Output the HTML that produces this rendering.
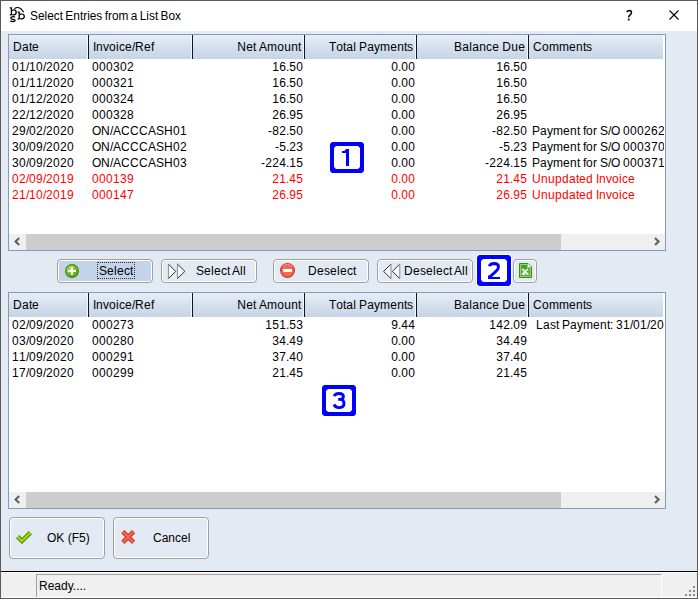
<!DOCTYPE html>
<html><head><meta charset="utf-8">
<style>
*{margin:0;padding:0;box-sizing:border-box}
html,body{width:698px;height:599px;overflow:hidden;background:#5a5a5a}
body{position:relative;font-family:"Liberation Sans",sans-serif;font-size:12px;color:#000}
.abs{position:absolute}
.t{position:absolute;white-space:nowrap;line-height:16px}
.r{text-align:right}
.red{color:#f00}
</style></head><body>

<div class="abs" style="left:1px;top:1px;width:696px;height:570px;background:#e3eaf4"></div>
<div class="abs" style="left:1px;top:1px;width:696px;height:30px;background:#fff"></div>
<svg class="abs" style="left:0px;top:0px" width="30" height="26" viewBox="0 0 30 26">
<g fill="none" stroke="#000" stroke-width="1.25">
<path d="M9.8 7.8H11.4V15M9.8 14.9H11.4"/>
<path d="M11.4 11.2Q12.6 9.8 14 9.9Q16.2 10.1 16.2 12.4Q16.1 14.6 14 14.8Q12.4 14.9 11.4 14.2"/>
<path d="M17.6 12H19.2V19.1M17.6 19H19.2"/>
<path d="M19.2 15.3Q20.4 13.9 21.8 14Q24.3 14.2 24.3 16.5Q24.2 18.8 21.8 18.9Q20.2 19 19.2 18.3"/>
<path d="M15 17.3Q14.2 16.6 12.8 16.7Q10.6 16.8 10.9 18.3Q11.3 19.1 13 19.3Q15.3 19.6 15.2 20.6Q14.9 21.6 12.8 21.5Q11 21.4 10.3 20.7" stroke-width="1.3"/>
<path d="M14.4 8.7Q19 5.2 23.8 12.2" stroke-width="1.1"/>
</g>
</svg>
<div class="t" style="left:30px;top:8px;font-size:12.5px;line-height:16px;word-spacing:-1px;transform:scaleX(0.95);transform-origin:0 0">Select Entries from a List Box</div>
<svg class="abs" style="left:620px;top:6px" width="20" height="18" viewBox="0 0 20 18"><path d="M6.7 6.1Q7.6 4.4 9.4 4.4Q11.5 4.5 11.5 6.5Q11.4 8 9.9 9.1Q8.7 10 8.7 11.5" stroke="#000" stroke-width="1.5" fill="none"/><rect x="7.8" y="12.7" width="1.9" height="1.7" fill="#000"/></svg>
<svg class="abs" style="left:669px;top:10px" width="11" height="11" viewBox="0 0 11 11"><path d="M0.5 0.5L9.5 9.5M9.5 0.5L0.5 9.5" stroke="#000" stroke-width="1.1"/></svg>
<div class="abs" style="left:8px;top:34px;width:658px;height:217px;border:1px solid #7f9cbc;background:#fff"></div>
<div class="abs" style="left:9px;top:35px;width:654px;height:24px;background:linear-gradient(#e7edf5,#c5d4e6)"></div>
<div class="t" style="left:13px;top:39px"><i style="display:inline-block;width:9px;font-style:normal">D</i><i style="display:inline-block;width:7px;font-style:normal">a</i><i style="display:inline-block;width:3px;font-style:normal">t</i><i style="display:inline-block;width:7px;font-style:normal">e</i></div>
<div class="abs" style="left:87px;top:35px;width:1px;height:24px;background:#f4f7fb"></div>
<div class="abs" style="left:88px;top:35px;width:1px;height:24px;background:#161616"></div>
<div class="t" style="left:93px;top:39px"><i style="display:inline-block;width:3px;font-style:normal">I</i><i style="display:inline-block;width:7px;font-style:normal">n</i><i style="display:inline-block;width:6px;font-style:normal">v</i><i style="display:inline-block;width:7px;font-style:normal">o</i><i style="display:inline-block;width:3px;font-style:normal">i</i><i style="display:inline-block;width:6px;font-style:normal">c</i><i style="display:inline-block;width:7px;font-style:normal">e</i><i style="display:inline-block;width:3px;font-style:normal">/</i><i style="display:inline-block;width:9px;font-style:normal">R</i><i style="display:inline-block;width:7px;font-style:normal">e</i><i style="display:inline-block;width:3px;font-style:normal">f</i></div>
<div class="abs" style="left:191px;top:35px;width:1px;height:24px;background:#f4f7fb"></div>
<div class="abs" style="left:192px;top:35px;width:1px;height:24px;background:#161616"></div>
<div class="t r" style="left:193px;width:108px;top:39px"><i style="display:inline-block;width:9px;font-style:normal">N</i><i style="display:inline-block;width:7px;font-style:normal">e</i><i style="display:inline-block;width:3px;font-style:normal">t</i><i style="display:inline-block;width:3px;font-style:normal">&nbsp;</i><i style="display:inline-block;width:8px;font-style:normal">A</i><i style="display:inline-block;width:10px;font-style:normal">m</i><i style="display:inline-block;width:7px;font-style:normal">o</i><i style="display:inline-block;width:7px;font-style:normal">u</i><i style="display:inline-block;width:7px;font-style:normal">n</i><i style="display:inline-block;width:3px;font-style:normal">t</i></div>
<div class="abs" style="left:303px;top:35px;width:1px;height:24px;background:#f4f7fb"></div>
<div class="abs" style="left:304px;top:35px;width:1px;height:24px;background:#161616"></div>
<div class="t r" style="left:305px;width:108px;top:39px"><i style="display:inline-block;width:7px;font-style:normal">T</i><i style="display:inline-block;width:7px;font-style:normal">o</i><i style="display:inline-block;width:3px;font-style:normal">t</i><i style="display:inline-block;width:7px;font-style:normal">a</i><i style="display:inline-block;width:3px;font-style:normal">l</i><i style="display:inline-block;width:3px;font-style:normal">&nbsp;</i><i style="display:inline-block;width:8px;font-style:normal">P</i><i style="display:inline-block;width:7px;font-style:normal">a</i><i style="display:inline-block;width:6px;font-style:normal">y</i><i style="display:inline-block;width:10px;font-style:normal">m</i><i style="display:inline-block;width:7px;font-style:normal">e</i><i style="display:inline-block;width:7px;font-style:normal">n</i><i style="display:inline-block;width:3px;font-style:normal">t</i><i style="display:inline-block;width:6px;font-style:normal">s</i></div>
<div class="abs" style="left:415px;top:35px;width:1px;height:24px;background:#f4f7fb"></div>
<div class="abs" style="left:416px;top:35px;width:1px;height:24px;background:#161616"></div>
<div class="t r" style="left:417px;width:108px;top:39px"><i style="display:inline-block;width:8px;font-style:normal">B</i><i style="display:inline-block;width:7px;font-style:normal">a</i><i style="display:inline-block;width:3px;font-style:normal">l</i><i style="display:inline-block;width:7px;font-style:normal">a</i><i style="display:inline-block;width:7px;font-style:normal">n</i><i style="display:inline-block;width:6px;font-style:normal">c</i><i style="display:inline-block;width:7px;font-style:normal">e</i><i style="display:inline-block;width:3px;font-style:normal">&nbsp;</i><i style="display:inline-block;width:9px;font-style:normal">D</i><i style="display:inline-block;width:7px;font-style:normal">u</i><i style="display:inline-block;width:7px;font-style:normal">e</i></div>
<div class="abs" style="left:527px;top:35px;width:1px;height:24px;background:#f4f7fb"></div>
<div class="abs" style="left:528px;top:35px;width:1px;height:24px;background:#161616"></div>
<div class="t" style="left:533px;top:39px"><i style="display:inline-block;width:9px;font-style:normal">C</i><i style="display:inline-block;width:7px;font-style:normal">o</i><i style="display:inline-block;width:10px;font-style:normal">m</i><i style="display:inline-block;width:10px;font-style:normal">m</i><i style="display:inline-block;width:7px;font-style:normal">e</i><i style="display:inline-block;width:7px;font-style:normal">n</i><i style="display:inline-block;width:3px;font-style:normal">t</i><i style="display:inline-block;width:6px;font-style:normal">s</i></div>
<div class="t" style="left:12px;top:59px;width:652px;overflow:hidden"><i style="display:inline-block;width:7px;font-style:normal">0</i><i style="display:inline-block;width:7px;font-style:normal">1</i><i style="display:inline-block;width:3px;font-style:normal">/</i><i style="display:inline-block;width:7px;font-style:normal">1</i><i style="display:inline-block;width:7px;font-style:normal">0</i><i style="display:inline-block;width:3px;font-style:normal">/</i><i style="display:inline-block;width:7px;font-style:normal">2</i><i style="display:inline-block;width:7px;font-style:normal">0</i><i style="display:inline-block;width:7px;font-style:normal">2</i><i style="display:inline-block;width:7px;font-style:normal">0</i></div>
<div class="t" style="left:92px;top:59px;width:572px;overflow:hidden"><i style="display:inline-block;width:7px;font-style:normal">0</i><i style="display:inline-block;width:7px;font-style:normal">0</i><i style="display:inline-block;width:7px;font-style:normal">0</i><i style="display:inline-block;width:7px;font-style:normal">3</i><i style="display:inline-block;width:7px;font-style:normal">0</i><i style="display:inline-block;width:7px;font-style:normal">2</i></div>
<div class="t r" style="left:193px;width:110px;top:59px"><i style="display:inline-block;width:7px;font-style:normal">1</i><i style="display:inline-block;width:7px;font-style:normal">6</i><i style="display:inline-block;width:3px;font-style:normal">.</i><i style="display:inline-block;width:7px;font-style:normal">5</i><i style="display:inline-block;width:7px;font-style:normal">0</i></div>
<div class="t r" style="left:305px;width:110px;top:59px"><i style="display:inline-block;width:7px;font-style:normal">0</i><i style="display:inline-block;width:3px;font-style:normal">.</i><i style="display:inline-block;width:7px;font-style:normal">0</i><i style="display:inline-block;width:7px;font-style:normal">0</i></div>
<div class="t r" style="left:417px;width:110px;top:59px"><i style="display:inline-block;width:7px;font-style:normal">1</i><i style="display:inline-block;width:7px;font-style:normal">6</i><i style="display:inline-block;width:3px;font-style:normal">.</i><i style="display:inline-block;width:7px;font-style:normal">5</i><i style="display:inline-block;width:7px;font-style:normal">0</i></div>
<div class="t" style="left:12px;top:75px;width:652px;overflow:hidden"><i style="display:inline-block;width:7px;font-style:normal">0</i><i style="display:inline-block;width:7px;font-style:normal">1</i><i style="display:inline-block;width:3px;font-style:normal">/</i><i style="display:inline-block;width:7px;font-style:normal">1</i><i style="display:inline-block;width:7px;font-style:normal">1</i><i style="display:inline-block;width:3px;font-style:normal">/</i><i style="display:inline-block;width:7px;font-style:normal">2</i><i style="display:inline-block;width:7px;font-style:normal">0</i><i style="display:inline-block;width:7px;font-style:normal">2</i><i style="display:inline-block;width:7px;font-style:normal">0</i></div>
<div class="t" style="left:92px;top:75px;width:572px;overflow:hidden"><i style="display:inline-block;width:7px;font-style:normal">0</i><i style="display:inline-block;width:7px;font-style:normal">0</i><i style="display:inline-block;width:7px;font-style:normal">0</i><i style="display:inline-block;width:7px;font-style:normal">3</i><i style="display:inline-block;width:7px;font-style:normal">2</i><i style="display:inline-block;width:7px;font-style:normal">1</i></div>
<div class="t r" style="left:193px;width:110px;top:75px"><i style="display:inline-block;width:7px;font-style:normal">1</i><i style="display:inline-block;width:7px;font-style:normal">6</i><i style="display:inline-block;width:3px;font-style:normal">.</i><i style="display:inline-block;width:7px;font-style:normal">5</i><i style="display:inline-block;width:7px;font-style:normal">0</i></div>
<div class="t r" style="left:305px;width:110px;top:75px"><i style="display:inline-block;width:7px;font-style:normal">0</i><i style="display:inline-block;width:3px;font-style:normal">.</i><i style="display:inline-block;width:7px;font-style:normal">0</i><i style="display:inline-block;width:7px;font-style:normal">0</i></div>
<div class="t r" style="left:417px;width:110px;top:75px"><i style="display:inline-block;width:7px;font-style:normal">1</i><i style="display:inline-block;width:7px;font-style:normal">6</i><i style="display:inline-block;width:3px;font-style:normal">.</i><i style="display:inline-block;width:7px;font-style:normal">5</i><i style="display:inline-block;width:7px;font-style:normal">0</i></div>
<div class="t" style="left:12px;top:91px;width:652px;overflow:hidden"><i style="display:inline-block;width:7px;font-style:normal">0</i><i style="display:inline-block;width:7px;font-style:normal">1</i><i style="display:inline-block;width:3px;font-style:normal">/</i><i style="display:inline-block;width:7px;font-style:normal">1</i><i style="display:inline-block;width:7px;font-style:normal">2</i><i style="display:inline-block;width:3px;font-style:normal">/</i><i style="display:inline-block;width:7px;font-style:normal">2</i><i style="display:inline-block;width:7px;font-style:normal">0</i><i style="display:inline-block;width:7px;font-style:normal">2</i><i style="display:inline-block;width:7px;font-style:normal">0</i></div>
<div class="t" style="left:92px;top:91px;width:572px;overflow:hidden"><i style="display:inline-block;width:7px;font-style:normal">0</i><i style="display:inline-block;width:7px;font-style:normal">0</i><i style="display:inline-block;width:7px;font-style:normal">0</i><i style="display:inline-block;width:7px;font-style:normal">3</i><i style="display:inline-block;width:7px;font-style:normal">2</i><i style="display:inline-block;width:7px;font-style:normal">4</i></div>
<div class="t r" style="left:193px;width:110px;top:91px"><i style="display:inline-block;width:7px;font-style:normal">1</i><i style="display:inline-block;width:7px;font-style:normal">6</i><i style="display:inline-block;width:3px;font-style:normal">.</i><i style="display:inline-block;width:7px;font-style:normal">5</i><i style="display:inline-block;width:7px;font-style:normal">0</i></div>
<div class="t r" style="left:305px;width:110px;top:91px"><i style="display:inline-block;width:7px;font-style:normal">0</i><i style="display:inline-block;width:3px;font-style:normal">.</i><i style="display:inline-block;width:7px;font-style:normal">0</i><i style="display:inline-block;width:7px;font-style:normal">0</i></div>
<div class="t r" style="left:417px;width:110px;top:91px"><i style="display:inline-block;width:7px;font-style:normal">1</i><i style="display:inline-block;width:7px;font-style:normal">6</i><i style="display:inline-block;width:3px;font-style:normal">.</i><i style="display:inline-block;width:7px;font-style:normal">5</i><i style="display:inline-block;width:7px;font-style:normal">0</i></div>
<div class="t" style="left:12px;top:107px;width:652px;overflow:hidden"><i style="display:inline-block;width:7px;font-style:normal">2</i><i style="display:inline-block;width:7px;font-style:normal">2</i><i style="display:inline-block;width:3px;font-style:normal">/</i><i style="display:inline-block;width:7px;font-style:normal">1</i><i style="display:inline-block;width:7px;font-style:normal">2</i><i style="display:inline-block;width:3px;font-style:normal">/</i><i style="display:inline-block;width:7px;font-style:normal">2</i><i style="display:inline-block;width:7px;font-style:normal">0</i><i style="display:inline-block;width:7px;font-style:normal">2</i><i style="display:inline-block;width:7px;font-style:normal">0</i></div>
<div class="t" style="left:92px;top:107px;width:572px;overflow:hidden"><i style="display:inline-block;width:7px;font-style:normal">0</i><i style="display:inline-block;width:7px;font-style:normal">0</i><i style="display:inline-block;width:7px;font-style:normal">0</i><i style="display:inline-block;width:7px;font-style:normal">3</i><i style="display:inline-block;width:7px;font-style:normal">2</i><i style="display:inline-block;width:7px;font-style:normal">8</i></div>
<div class="t r" style="left:193px;width:110px;top:107px"><i style="display:inline-block;width:7px;font-style:normal">2</i><i style="display:inline-block;width:7px;font-style:normal">6</i><i style="display:inline-block;width:3px;font-style:normal">.</i><i style="display:inline-block;width:7px;font-style:normal">9</i><i style="display:inline-block;width:7px;font-style:normal">5</i></div>
<div class="t r" style="left:305px;width:110px;top:107px"><i style="display:inline-block;width:7px;font-style:normal">0</i><i style="display:inline-block;width:3px;font-style:normal">.</i><i style="display:inline-block;width:7px;font-style:normal">0</i><i style="display:inline-block;width:7px;font-style:normal">0</i></div>
<div class="t r" style="left:417px;width:110px;top:107px"><i style="display:inline-block;width:7px;font-style:normal">2</i><i style="display:inline-block;width:7px;font-style:normal">6</i><i style="display:inline-block;width:3px;font-style:normal">.</i><i style="display:inline-block;width:7px;font-style:normal">9</i><i style="display:inline-block;width:7px;font-style:normal">5</i></div>
<div class="t" style="left:12px;top:123px;width:652px;overflow:hidden"><i style="display:inline-block;width:7px;font-style:normal">2</i><i style="display:inline-block;width:7px;font-style:normal">9</i><i style="display:inline-block;width:3px;font-style:normal">/</i><i style="display:inline-block;width:7px;font-style:normal">0</i><i style="display:inline-block;width:7px;font-style:normal">2</i><i style="display:inline-block;width:3px;font-style:normal">/</i><i style="display:inline-block;width:7px;font-style:normal">2</i><i style="display:inline-block;width:7px;font-style:normal">0</i><i style="display:inline-block;width:7px;font-style:normal">2</i><i style="display:inline-block;width:7px;font-style:normal">0</i></div>
<div class="t" style="left:92px;top:123px;width:572px;overflow:hidden"><i style="display:inline-block;width:9px;font-style:normal">O</i><i style="display:inline-block;width:9px;font-style:normal">N</i><i style="display:inline-block;width:3px;font-style:normal">/</i><i style="display:inline-block;width:8px;font-style:normal">A</i><i style="display:inline-block;width:9px;font-style:normal">C</i><i style="display:inline-block;width:9px;font-style:normal">C</i><i style="display:inline-block;width:9px;font-style:normal">C</i><i style="display:inline-block;width:8px;font-style:normal">A</i><i style="display:inline-block;width:8px;font-style:normal">S</i><i style="display:inline-block;width:9px;font-style:normal">H</i><i style="display:inline-block;width:7px;font-style:normal">0</i><i style="display:inline-block;width:7px;font-style:normal">1</i></div>
<div class="t r" style="left:193px;width:110px;top:123px"><i style="display:inline-block;width:4px;font-style:normal">-</i><i style="display:inline-block;width:7px;font-style:normal">8</i><i style="display:inline-block;width:7px;font-style:normal">2</i><i style="display:inline-block;width:3px;font-style:normal">.</i><i style="display:inline-block;width:7px;font-style:normal">5</i><i style="display:inline-block;width:7px;font-style:normal">0</i></div>
<div class="t r" style="left:305px;width:110px;top:123px"><i style="display:inline-block;width:7px;font-style:normal">0</i><i style="display:inline-block;width:3px;font-style:normal">.</i><i style="display:inline-block;width:7px;font-style:normal">0</i><i style="display:inline-block;width:7px;font-style:normal">0</i></div>
<div class="t r" style="left:417px;width:110px;top:123px"><i style="display:inline-block;width:4px;font-style:normal">-</i><i style="display:inline-block;width:7px;font-style:normal">8</i><i style="display:inline-block;width:7px;font-style:normal">2</i><i style="display:inline-block;width:3px;font-style:normal">.</i><i style="display:inline-block;width:7px;font-style:normal">5</i><i style="display:inline-block;width:7px;font-style:normal">0</i></div>
<div class="t" style="left:532px;top:123px;width:132px;overflow:hidden"><i style="display:inline-block;width:8px;font-style:normal">P</i><i style="display:inline-block;width:7px;font-style:normal">a</i><i style="display:inline-block;width:6px;font-style:normal">y</i><i style="display:inline-block;width:10px;font-style:normal">m</i><i style="display:inline-block;width:7px;font-style:normal">e</i><i style="display:inline-block;width:7px;font-style:normal">n</i><i style="display:inline-block;width:3px;font-style:normal">t</i><i style="display:inline-block;width:3px;font-style:normal">&nbsp;</i><i style="display:inline-block;width:3px;font-style:normal">f</i><i style="display:inline-block;width:7px;font-style:normal">o</i><i style="display:inline-block;width:4px;font-style:normal">r</i><i style="display:inline-block;width:3px;font-style:normal">&nbsp;</i><i style="display:inline-block;width:8px;font-style:normal">S</i><i style="display:inline-block;width:3px;font-style:normal">/</i><i style="display:inline-block;width:9px;font-style:normal">O</i><i style="display:inline-block;width:3px;font-style:normal">&nbsp;</i><i style="display:inline-block;width:7px;font-style:normal">0</i><i style="display:inline-block;width:7px;font-style:normal">0</i><i style="display:inline-block;width:7px;font-style:normal">0</i><i style="display:inline-block;width:7px;font-style:normal">2</i><i style="display:inline-block;width:7px;font-style:normal">6</i><i style="display:inline-block;width:7px;font-style:normal">2</i></div>
<div class="t" style="left:12px;top:139px;width:652px;overflow:hidden"><i style="display:inline-block;width:7px;font-style:normal">3</i><i style="display:inline-block;width:7px;font-style:normal">0</i><i style="display:inline-block;width:3px;font-style:normal">/</i><i style="display:inline-block;width:7px;font-style:normal">0</i><i style="display:inline-block;width:7px;font-style:normal">9</i><i style="display:inline-block;width:3px;font-style:normal">/</i><i style="display:inline-block;width:7px;font-style:normal">2</i><i style="display:inline-block;width:7px;font-style:normal">0</i><i style="display:inline-block;width:7px;font-style:normal">2</i><i style="display:inline-block;width:7px;font-style:normal">0</i></div>
<div class="t" style="left:92px;top:139px;width:572px;overflow:hidden"><i style="display:inline-block;width:9px;font-style:normal">O</i><i style="display:inline-block;width:9px;font-style:normal">N</i><i style="display:inline-block;width:3px;font-style:normal">/</i><i style="display:inline-block;width:8px;font-style:normal">A</i><i style="display:inline-block;width:9px;font-style:normal">C</i><i style="display:inline-block;width:9px;font-style:normal">C</i><i style="display:inline-block;width:9px;font-style:normal">C</i><i style="display:inline-block;width:8px;font-style:normal">A</i><i style="display:inline-block;width:8px;font-style:normal">S</i><i style="display:inline-block;width:9px;font-style:normal">H</i><i style="display:inline-block;width:7px;font-style:normal">0</i><i style="display:inline-block;width:7px;font-style:normal">2</i></div>
<div class="t r" style="left:193px;width:110px;top:139px"><i style="display:inline-block;width:4px;font-style:normal">-</i><i style="display:inline-block;width:7px;font-style:normal">5</i><i style="display:inline-block;width:3px;font-style:normal">.</i><i style="display:inline-block;width:7px;font-style:normal">2</i><i style="display:inline-block;width:7px;font-style:normal">3</i></div>
<div class="t r" style="left:305px;width:110px;top:139px"><i style="display:inline-block;width:7px;font-style:normal">0</i><i style="display:inline-block;width:3px;font-style:normal">.</i><i style="display:inline-block;width:7px;font-style:normal">0</i><i style="display:inline-block;width:7px;font-style:normal">0</i></div>
<div class="t r" style="left:417px;width:110px;top:139px"><i style="display:inline-block;width:4px;font-style:normal">-</i><i style="display:inline-block;width:7px;font-style:normal">5</i><i style="display:inline-block;width:3px;font-style:normal">.</i><i style="display:inline-block;width:7px;font-style:normal">2</i><i style="display:inline-block;width:7px;font-style:normal">3</i></div>
<div class="t" style="left:532px;top:139px;width:132px;overflow:hidden"><i style="display:inline-block;width:8px;font-style:normal">P</i><i style="display:inline-block;width:7px;font-style:normal">a</i><i style="display:inline-block;width:6px;font-style:normal">y</i><i style="display:inline-block;width:10px;font-style:normal">m</i><i style="display:inline-block;width:7px;font-style:normal">e</i><i style="display:inline-block;width:7px;font-style:normal">n</i><i style="display:inline-block;width:3px;font-style:normal">t</i><i style="display:inline-block;width:3px;font-style:normal">&nbsp;</i><i style="display:inline-block;width:3px;font-style:normal">f</i><i style="display:inline-block;width:7px;font-style:normal">o</i><i style="display:inline-block;width:4px;font-style:normal">r</i><i style="display:inline-block;width:3px;font-style:normal">&nbsp;</i><i style="display:inline-block;width:8px;font-style:normal">S</i><i style="display:inline-block;width:3px;font-style:normal">/</i><i style="display:inline-block;width:9px;font-style:normal">O</i><i style="display:inline-block;width:3px;font-style:normal">&nbsp;</i><i style="display:inline-block;width:7px;font-style:normal">0</i><i style="display:inline-block;width:7px;font-style:normal">0</i><i style="display:inline-block;width:7px;font-style:normal">0</i><i style="display:inline-block;width:7px;font-style:normal">3</i><i style="display:inline-block;width:7px;font-style:normal">7</i><i style="display:inline-block;width:7px;font-style:normal">0</i></div>
<div class="t" style="left:12px;top:155px;width:652px;overflow:hidden"><i style="display:inline-block;width:7px;font-style:normal">3</i><i style="display:inline-block;width:7px;font-style:normal">0</i><i style="display:inline-block;width:3px;font-style:normal">/</i><i style="display:inline-block;width:7px;font-style:normal">0</i><i style="display:inline-block;width:7px;font-style:normal">9</i><i style="display:inline-block;width:3px;font-style:normal">/</i><i style="display:inline-block;width:7px;font-style:normal">2</i><i style="display:inline-block;width:7px;font-style:normal">0</i><i style="display:inline-block;width:7px;font-style:normal">2</i><i style="display:inline-block;width:7px;font-style:normal">0</i></div>
<div class="t" style="left:92px;top:155px;width:572px;overflow:hidden"><i style="display:inline-block;width:9px;font-style:normal">O</i><i style="display:inline-block;width:9px;font-style:normal">N</i><i style="display:inline-block;width:3px;font-style:normal">/</i><i style="display:inline-block;width:8px;font-style:normal">A</i><i style="display:inline-block;width:9px;font-style:normal">C</i><i style="display:inline-block;width:9px;font-style:normal">C</i><i style="display:inline-block;width:9px;font-style:normal">C</i><i style="display:inline-block;width:8px;font-style:normal">A</i><i style="display:inline-block;width:8px;font-style:normal">S</i><i style="display:inline-block;width:9px;font-style:normal">H</i><i style="display:inline-block;width:7px;font-style:normal">0</i><i style="display:inline-block;width:7px;font-style:normal">3</i></div>
<div class="t r" style="left:193px;width:110px;top:155px"><i style="display:inline-block;width:4px;font-style:normal">-</i><i style="display:inline-block;width:7px;font-style:normal">2</i><i style="display:inline-block;width:7px;font-style:normal">2</i><i style="display:inline-block;width:7px;font-style:normal">4</i><i style="display:inline-block;width:3px;font-style:normal">.</i><i style="display:inline-block;width:7px;font-style:normal">1</i><i style="display:inline-block;width:7px;font-style:normal">5</i></div>
<div class="t r" style="left:305px;width:110px;top:155px"><i style="display:inline-block;width:7px;font-style:normal">0</i><i style="display:inline-block;width:3px;font-style:normal">.</i><i style="display:inline-block;width:7px;font-style:normal">0</i><i style="display:inline-block;width:7px;font-style:normal">0</i></div>
<div class="t r" style="left:417px;width:110px;top:155px"><i style="display:inline-block;width:4px;font-style:normal">-</i><i style="display:inline-block;width:7px;font-style:normal">2</i><i style="display:inline-block;width:7px;font-style:normal">2</i><i style="display:inline-block;width:7px;font-style:normal">4</i><i style="display:inline-block;width:3px;font-style:normal">.</i><i style="display:inline-block;width:7px;font-style:normal">1</i><i style="display:inline-block;width:7px;font-style:normal">5</i></div>
<div class="t" style="left:532px;top:155px;width:132px;overflow:hidden"><i style="display:inline-block;width:8px;font-style:normal">P</i><i style="display:inline-block;width:7px;font-style:normal">a</i><i style="display:inline-block;width:6px;font-style:normal">y</i><i style="display:inline-block;width:10px;font-style:normal">m</i><i style="display:inline-block;width:7px;font-style:normal">e</i><i style="display:inline-block;width:7px;font-style:normal">n</i><i style="display:inline-block;width:3px;font-style:normal">t</i><i style="display:inline-block;width:3px;font-style:normal">&nbsp;</i><i style="display:inline-block;width:3px;font-style:normal">f</i><i style="display:inline-block;width:7px;font-style:normal">o</i><i style="display:inline-block;width:4px;font-style:normal">r</i><i style="display:inline-block;width:3px;font-style:normal">&nbsp;</i><i style="display:inline-block;width:8px;font-style:normal">S</i><i style="display:inline-block;width:3px;font-style:normal">/</i><i style="display:inline-block;width:9px;font-style:normal">O</i><i style="display:inline-block;width:3px;font-style:normal">&nbsp;</i><i style="display:inline-block;width:7px;font-style:normal">0</i><i style="display:inline-block;width:7px;font-style:normal">0</i><i style="display:inline-block;width:7px;font-style:normal">0</i><i style="display:inline-block;width:7px;font-style:normal">3</i><i style="display:inline-block;width:7px;font-style:normal">7</i><i style="display:inline-block;width:7px;font-style:normal">1</i></div>
<div class="t red" style="left:12px;top:171px;width:652px;overflow:hidden"><i style="display:inline-block;width:7px;font-style:normal">0</i><i style="display:inline-block;width:7px;font-style:normal">2</i><i style="display:inline-block;width:3px;font-style:normal">/</i><i style="display:inline-block;width:7px;font-style:normal">0</i><i style="display:inline-block;width:7px;font-style:normal">9</i><i style="display:inline-block;width:3px;font-style:normal">/</i><i style="display:inline-block;width:7px;font-style:normal">2</i><i style="display:inline-block;width:7px;font-style:normal">0</i><i style="display:inline-block;width:7px;font-style:normal">1</i><i style="display:inline-block;width:7px;font-style:normal">9</i></div>
<div class="t red" style="left:92px;top:171px;width:572px;overflow:hidden"><i style="display:inline-block;width:7px;font-style:normal">0</i><i style="display:inline-block;width:7px;font-style:normal">0</i><i style="display:inline-block;width:7px;font-style:normal">0</i><i style="display:inline-block;width:7px;font-style:normal">1</i><i style="display:inline-block;width:7px;font-style:normal">3</i><i style="display:inline-block;width:7px;font-style:normal">9</i></div>
<div class="t r red" style="left:193px;width:110px;top:171px"><i style="display:inline-block;width:7px;font-style:normal">2</i><i style="display:inline-block;width:7px;font-style:normal">1</i><i style="display:inline-block;width:3px;font-style:normal">.</i><i style="display:inline-block;width:7px;font-style:normal">4</i><i style="display:inline-block;width:7px;font-style:normal">5</i></div>
<div class="t r red" style="left:305px;width:110px;top:171px"><i style="display:inline-block;width:7px;font-style:normal">0</i><i style="display:inline-block;width:3px;font-style:normal">.</i><i style="display:inline-block;width:7px;font-style:normal">0</i><i style="display:inline-block;width:7px;font-style:normal">0</i></div>
<div class="t r red" style="left:417px;width:110px;top:171px"><i style="display:inline-block;width:7px;font-style:normal">2</i><i style="display:inline-block;width:7px;font-style:normal">1</i><i style="display:inline-block;width:3px;font-style:normal">.</i><i style="display:inline-block;width:7px;font-style:normal">4</i><i style="display:inline-block;width:7px;font-style:normal">5</i></div>
<div class="t red" style="left:532px;top:171px;width:132px;overflow:hidden"><i style="display:inline-block;width:9px;font-style:normal">U</i><i style="display:inline-block;width:7px;font-style:normal">n</i><i style="display:inline-block;width:7px;font-style:normal">u</i><i style="display:inline-block;width:7px;font-style:normal">p</i><i style="display:inline-block;width:7px;font-style:normal">d</i><i style="display:inline-block;width:7px;font-style:normal">a</i><i style="display:inline-block;width:3px;font-style:normal">t</i><i style="display:inline-block;width:7px;font-style:normal">e</i><i style="display:inline-block;width:7px;font-style:normal">d</i><i style="display:inline-block;width:3px;font-style:normal">&nbsp;</i><i style="display:inline-block;width:3px;font-style:normal">I</i><i style="display:inline-block;width:7px;font-style:normal">n</i><i style="display:inline-block;width:6px;font-style:normal">v</i><i style="display:inline-block;width:7px;font-style:normal">o</i><i style="display:inline-block;width:3px;font-style:normal">i</i><i style="display:inline-block;width:6px;font-style:normal">c</i><i style="display:inline-block;width:7px;font-style:normal">e</i></div>
<div class="t red" style="left:12px;top:187px;width:652px;overflow:hidden"><i style="display:inline-block;width:7px;font-style:normal">2</i><i style="display:inline-block;width:7px;font-style:normal">1</i><i style="display:inline-block;width:3px;font-style:normal">/</i><i style="display:inline-block;width:7px;font-style:normal">1</i><i style="display:inline-block;width:7px;font-style:normal">0</i><i style="display:inline-block;width:3px;font-style:normal">/</i><i style="display:inline-block;width:7px;font-style:normal">2</i><i style="display:inline-block;width:7px;font-style:normal">0</i><i style="display:inline-block;width:7px;font-style:normal">1</i><i style="display:inline-block;width:7px;font-style:normal">9</i></div>
<div class="t red" style="left:92px;top:187px;width:572px;overflow:hidden"><i style="display:inline-block;width:7px;font-style:normal">0</i><i style="display:inline-block;width:7px;font-style:normal">0</i><i style="display:inline-block;width:7px;font-style:normal">0</i><i style="display:inline-block;width:7px;font-style:normal">1</i><i style="display:inline-block;width:7px;font-style:normal">4</i><i style="display:inline-block;width:7px;font-style:normal">7</i></div>
<div class="t r red" style="left:193px;width:110px;top:187px"><i style="display:inline-block;width:7px;font-style:normal">2</i><i style="display:inline-block;width:7px;font-style:normal">6</i><i style="display:inline-block;width:3px;font-style:normal">.</i><i style="display:inline-block;width:7px;font-style:normal">9</i><i style="display:inline-block;width:7px;font-style:normal">5</i></div>
<div class="t r red" style="left:305px;width:110px;top:187px"><i style="display:inline-block;width:7px;font-style:normal">0</i><i style="display:inline-block;width:3px;font-style:normal">.</i><i style="display:inline-block;width:7px;font-style:normal">0</i><i style="display:inline-block;width:7px;font-style:normal">0</i></div>
<div class="t r red" style="left:417px;width:110px;top:187px"><i style="display:inline-block;width:7px;font-style:normal">2</i><i style="display:inline-block;width:7px;font-style:normal">6</i><i style="display:inline-block;width:3px;font-style:normal">.</i><i style="display:inline-block;width:7px;font-style:normal">9</i><i style="display:inline-block;width:7px;font-style:normal">5</i></div>
<div class="t red" style="left:532px;top:187px;width:132px;overflow:hidden"><i style="display:inline-block;width:9px;font-style:normal">U</i><i style="display:inline-block;width:7px;font-style:normal">n</i><i style="display:inline-block;width:7px;font-style:normal">u</i><i style="display:inline-block;width:7px;font-style:normal">p</i><i style="display:inline-block;width:7px;font-style:normal">d</i><i style="display:inline-block;width:7px;font-style:normal">a</i><i style="display:inline-block;width:3px;font-style:normal">t</i><i style="display:inline-block;width:7px;font-style:normal">e</i><i style="display:inline-block;width:7px;font-style:normal">d</i><i style="display:inline-block;width:3px;font-style:normal">&nbsp;</i><i style="display:inline-block;width:3px;font-style:normal">I</i><i style="display:inline-block;width:7px;font-style:normal">n</i><i style="display:inline-block;width:6px;font-style:normal">v</i><i style="display:inline-block;width:7px;font-style:normal">o</i><i style="display:inline-block;width:3px;font-style:normal">i</i><i style="display:inline-block;width:6px;font-style:normal">c</i><i style="display:inline-block;width:7px;font-style:normal">e</i></div>
<div class="abs" style="left:9px;top:234px;width:656px;height:16px;background:#efefef"></div>
<div class="abs" style="left:26px;top:234px;width:535px;height:16px;background:#cdcdcd"></div>
<svg class="abs" style="left:13px;top:237px" width="10" height="11" viewBox="0 0 10 11"><path d="M6.2 1.1L2.6 4.5L6.2 7.9" fill="none" stroke="#606060" stroke-width="2.1"/></svg>
<svg class="abs" style="left:652px;top:237px" width="10" height="11" viewBox="0 0 10 11"><path d="M3 1.1L6.6 4.5L3 7.9" fill="none" stroke="#606060" stroke-width="2.1"/></svg>
<div class="abs" style="left:8px;top:292px;width:658px;height:217px;border:1px solid #7f9cbc;background:#fff"></div>
<div class="abs" style="left:9px;top:293px;width:654px;height:24px;background:linear-gradient(#e7edf5,#c5d4e6)"></div>
<div class="t" style="left:13px;top:297px"><i style="display:inline-block;width:9px;font-style:normal">D</i><i style="display:inline-block;width:7px;font-style:normal">a</i><i style="display:inline-block;width:3px;font-style:normal">t</i><i style="display:inline-block;width:7px;font-style:normal">e</i></div>
<div class="abs" style="left:87px;top:293px;width:1px;height:24px;background:#f4f7fb"></div>
<div class="abs" style="left:88px;top:293px;width:1px;height:24px;background:#161616"></div>
<div class="t" style="left:93px;top:297px"><i style="display:inline-block;width:3px;font-style:normal">I</i><i style="display:inline-block;width:7px;font-style:normal">n</i><i style="display:inline-block;width:6px;font-style:normal">v</i><i style="display:inline-block;width:7px;font-style:normal">o</i><i style="display:inline-block;width:3px;font-style:normal">i</i><i style="display:inline-block;width:6px;font-style:normal">c</i><i style="display:inline-block;width:7px;font-style:normal">e</i><i style="display:inline-block;width:3px;font-style:normal">/</i><i style="display:inline-block;width:9px;font-style:normal">R</i><i style="display:inline-block;width:7px;font-style:normal">e</i><i style="display:inline-block;width:3px;font-style:normal">f</i></div>
<div class="abs" style="left:191px;top:293px;width:1px;height:24px;background:#f4f7fb"></div>
<div class="abs" style="left:192px;top:293px;width:1px;height:24px;background:#161616"></div>
<div class="t r" style="left:193px;width:108px;top:297px"><i style="display:inline-block;width:9px;font-style:normal">N</i><i style="display:inline-block;width:7px;font-style:normal">e</i><i style="display:inline-block;width:3px;font-style:normal">t</i><i style="display:inline-block;width:3px;font-style:normal">&nbsp;</i><i style="display:inline-block;width:8px;font-style:normal">A</i><i style="display:inline-block;width:10px;font-style:normal">m</i><i style="display:inline-block;width:7px;font-style:normal">o</i><i style="display:inline-block;width:7px;font-style:normal">u</i><i style="display:inline-block;width:7px;font-style:normal">n</i><i style="display:inline-block;width:3px;font-style:normal">t</i></div>
<div class="abs" style="left:303px;top:293px;width:1px;height:24px;background:#f4f7fb"></div>
<div class="abs" style="left:304px;top:293px;width:1px;height:24px;background:#161616"></div>
<div class="t r" style="left:305px;width:108px;top:297px"><i style="display:inline-block;width:7px;font-style:normal">T</i><i style="display:inline-block;width:7px;font-style:normal">o</i><i style="display:inline-block;width:3px;font-style:normal">t</i><i style="display:inline-block;width:7px;font-style:normal">a</i><i style="display:inline-block;width:3px;font-style:normal">l</i><i style="display:inline-block;width:3px;font-style:normal">&nbsp;</i><i style="display:inline-block;width:8px;font-style:normal">P</i><i style="display:inline-block;width:7px;font-style:normal">a</i><i style="display:inline-block;width:6px;font-style:normal">y</i><i style="display:inline-block;width:10px;font-style:normal">m</i><i style="display:inline-block;width:7px;font-style:normal">e</i><i style="display:inline-block;width:7px;font-style:normal">n</i><i style="display:inline-block;width:3px;font-style:normal">t</i><i style="display:inline-block;width:6px;font-style:normal">s</i></div>
<div class="abs" style="left:415px;top:293px;width:1px;height:24px;background:#f4f7fb"></div>
<div class="abs" style="left:416px;top:293px;width:1px;height:24px;background:#161616"></div>
<div class="t r" style="left:417px;width:108px;top:297px"><i style="display:inline-block;width:8px;font-style:normal">B</i><i style="display:inline-block;width:7px;font-style:normal">a</i><i style="display:inline-block;width:3px;font-style:normal">l</i><i style="display:inline-block;width:7px;font-style:normal">a</i><i style="display:inline-block;width:7px;font-style:normal">n</i><i style="display:inline-block;width:6px;font-style:normal">c</i><i style="display:inline-block;width:7px;font-style:normal">e</i><i style="display:inline-block;width:3px;font-style:normal">&nbsp;</i><i style="display:inline-block;width:9px;font-style:normal">D</i><i style="display:inline-block;width:7px;font-style:normal">u</i><i style="display:inline-block;width:7px;font-style:normal">e</i></div>
<div class="abs" style="left:527px;top:293px;width:1px;height:24px;background:#f4f7fb"></div>
<div class="abs" style="left:528px;top:293px;width:1px;height:24px;background:#161616"></div>
<div class="t" style="left:533px;top:297px"><i style="display:inline-block;width:9px;font-style:normal">C</i><i style="display:inline-block;width:7px;font-style:normal">o</i><i style="display:inline-block;width:10px;font-style:normal">m</i><i style="display:inline-block;width:10px;font-style:normal">m</i><i style="display:inline-block;width:7px;font-style:normal">e</i><i style="display:inline-block;width:7px;font-style:normal">n</i><i style="display:inline-block;width:3px;font-style:normal">t</i><i style="display:inline-block;width:6px;font-style:normal">s</i></div>
<div class="t" style="left:12px;top:317px;width:652px;overflow:hidden"><i style="display:inline-block;width:7px;font-style:normal">0</i><i style="display:inline-block;width:7px;font-style:normal">2</i><i style="display:inline-block;width:3px;font-style:normal">/</i><i style="display:inline-block;width:7px;font-style:normal">0</i><i style="display:inline-block;width:7px;font-style:normal">9</i><i style="display:inline-block;width:3px;font-style:normal">/</i><i style="display:inline-block;width:7px;font-style:normal">2</i><i style="display:inline-block;width:7px;font-style:normal">0</i><i style="display:inline-block;width:7px;font-style:normal">2</i><i style="display:inline-block;width:7px;font-style:normal">0</i></div>
<div class="t" style="left:92px;top:317px;width:572px;overflow:hidden"><i style="display:inline-block;width:7px;font-style:normal">0</i><i style="display:inline-block;width:7px;font-style:normal">0</i><i style="display:inline-block;width:7px;font-style:normal">0</i><i style="display:inline-block;width:7px;font-style:normal">2</i><i style="display:inline-block;width:7px;font-style:normal">7</i><i style="display:inline-block;width:7px;font-style:normal">3</i></div>
<div class="t r" style="left:193px;width:110px;top:317px"><i style="display:inline-block;width:7px;font-style:normal">1</i><i style="display:inline-block;width:7px;font-style:normal">5</i><i style="display:inline-block;width:7px;font-style:normal">1</i><i style="display:inline-block;width:3px;font-style:normal">.</i><i style="display:inline-block;width:7px;font-style:normal">5</i><i style="display:inline-block;width:7px;font-style:normal">3</i></div>
<div class="t r" style="left:305px;width:110px;top:317px"><i style="display:inline-block;width:7px;font-style:normal">9</i><i style="display:inline-block;width:3px;font-style:normal">.</i><i style="display:inline-block;width:7px;font-style:normal">4</i><i style="display:inline-block;width:7px;font-style:normal">4</i></div>
<div class="t r" style="left:417px;width:110px;top:317px"><i style="display:inline-block;width:7px;font-style:normal">1</i><i style="display:inline-block;width:7px;font-style:normal">4</i><i style="display:inline-block;width:7px;font-style:normal">2</i><i style="display:inline-block;width:3px;font-style:normal">.</i><i style="display:inline-block;width:7px;font-style:normal">0</i><i style="display:inline-block;width:7px;font-style:normal">9</i></div>
<div class="t" style="left:532px;top:317px;width:132px;overflow:hidden"><i style="display:inline-block;width:4px;font-style:normal">&nbsp;</i><i style="display:inline-block;width:7px;font-style:normal">L</i><i style="display:inline-block;width:7px;font-style:normal">a</i><i style="display:inline-block;width:6px;font-style:normal">s</i><i style="display:inline-block;width:3px;font-style:normal">t</i><i style="display:inline-block;width:3px;font-style:normal">&nbsp;</i><i style="display:inline-block;width:8px;font-style:normal">P</i><i style="display:inline-block;width:7px;font-style:normal">a</i><i style="display:inline-block;width:6px;font-style:normal">y</i><i style="display:inline-block;width:10px;font-style:normal">m</i><i style="display:inline-block;width:7px;font-style:normal">e</i><i style="display:inline-block;width:7px;font-style:normal">n</i><i style="display:inline-block;width:3px;font-style:normal">t</i><i style="display:inline-block;width:3px;font-style:normal">:</i><i style="display:inline-block;width:3px;font-style:normal">&nbsp;</i><i style="display:inline-block;width:7px;font-style:normal">3</i><i style="display:inline-block;width:7px;font-style:normal">1</i><i style="display:inline-block;width:3px;font-style:normal">/</i><i style="display:inline-block;width:7px;font-style:normal">0</i><i style="display:inline-block;width:7px;font-style:normal">1</i><i style="display:inline-block;width:3px;font-style:normal">/</i><i style="display:inline-block;width:7px;font-style:normal">2</i><i style="display:inline-block;width:7px;font-style:normal">0</i><i style="display:inline-block;width:7px;font-style:normal">2</i><i style="display:inline-block;width:7px;font-style:normal">1</i></div>
<div class="t" style="left:12px;top:333px;width:652px;overflow:hidden"><i style="display:inline-block;width:7px;font-style:normal">0</i><i style="display:inline-block;width:7px;font-style:normal">3</i><i style="display:inline-block;width:3px;font-style:normal">/</i><i style="display:inline-block;width:7px;font-style:normal">0</i><i style="display:inline-block;width:7px;font-style:normal">9</i><i style="display:inline-block;width:3px;font-style:normal">/</i><i style="display:inline-block;width:7px;font-style:normal">2</i><i style="display:inline-block;width:7px;font-style:normal">0</i><i style="display:inline-block;width:7px;font-style:normal">2</i><i style="display:inline-block;width:7px;font-style:normal">0</i></div>
<div class="t" style="left:92px;top:333px;width:572px;overflow:hidden"><i style="display:inline-block;width:7px;font-style:normal">0</i><i style="display:inline-block;width:7px;font-style:normal">0</i><i style="display:inline-block;width:7px;font-style:normal">0</i><i style="display:inline-block;width:7px;font-style:normal">2</i><i style="display:inline-block;width:7px;font-style:normal">8</i><i style="display:inline-block;width:7px;font-style:normal">0</i></div>
<div class="t r" style="left:193px;width:110px;top:333px"><i style="display:inline-block;width:7px;font-style:normal">3</i><i style="display:inline-block;width:7px;font-style:normal">4</i><i style="display:inline-block;width:3px;font-style:normal">.</i><i style="display:inline-block;width:7px;font-style:normal">4</i><i style="display:inline-block;width:7px;font-style:normal">9</i></div>
<div class="t r" style="left:305px;width:110px;top:333px"><i style="display:inline-block;width:7px;font-style:normal">0</i><i style="display:inline-block;width:3px;font-style:normal">.</i><i style="display:inline-block;width:7px;font-style:normal">0</i><i style="display:inline-block;width:7px;font-style:normal">0</i></div>
<div class="t r" style="left:417px;width:110px;top:333px"><i style="display:inline-block;width:7px;font-style:normal">3</i><i style="display:inline-block;width:7px;font-style:normal">4</i><i style="display:inline-block;width:3px;font-style:normal">.</i><i style="display:inline-block;width:7px;font-style:normal">4</i><i style="display:inline-block;width:7px;font-style:normal">9</i></div>
<div class="t" style="left:12px;top:349px;width:652px;overflow:hidden"><i style="display:inline-block;width:7px;font-style:normal">1</i><i style="display:inline-block;width:7px;font-style:normal">1</i><i style="display:inline-block;width:3px;font-style:normal">/</i><i style="display:inline-block;width:7px;font-style:normal">0</i><i style="display:inline-block;width:7px;font-style:normal">9</i><i style="display:inline-block;width:3px;font-style:normal">/</i><i style="display:inline-block;width:7px;font-style:normal">2</i><i style="display:inline-block;width:7px;font-style:normal">0</i><i style="display:inline-block;width:7px;font-style:normal">2</i><i style="display:inline-block;width:7px;font-style:normal">0</i></div>
<div class="t" style="left:92px;top:349px;width:572px;overflow:hidden"><i style="display:inline-block;width:7px;font-style:normal">0</i><i style="display:inline-block;width:7px;font-style:normal">0</i><i style="display:inline-block;width:7px;font-style:normal">0</i><i style="display:inline-block;width:7px;font-style:normal">2</i><i style="display:inline-block;width:7px;font-style:normal">9</i><i style="display:inline-block;width:7px;font-style:normal">1</i></div>
<div class="t r" style="left:193px;width:110px;top:349px"><i style="display:inline-block;width:7px;font-style:normal">3</i><i style="display:inline-block;width:7px;font-style:normal">7</i><i style="display:inline-block;width:3px;font-style:normal">.</i><i style="display:inline-block;width:7px;font-style:normal">4</i><i style="display:inline-block;width:7px;font-style:normal">0</i></div>
<div class="t r" style="left:305px;width:110px;top:349px"><i style="display:inline-block;width:7px;font-style:normal">0</i><i style="display:inline-block;width:3px;font-style:normal">.</i><i style="display:inline-block;width:7px;font-style:normal">0</i><i style="display:inline-block;width:7px;font-style:normal">0</i></div>
<div class="t r" style="left:417px;width:110px;top:349px"><i style="display:inline-block;width:7px;font-style:normal">3</i><i style="display:inline-block;width:7px;font-style:normal">7</i><i style="display:inline-block;width:3px;font-style:normal">.</i><i style="display:inline-block;width:7px;font-style:normal">4</i><i style="display:inline-block;width:7px;font-style:normal">0</i></div>
<div class="t" style="left:12px;top:365px;width:652px;overflow:hidden"><i style="display:inline-block;width:7px;font-style:normal">1</i><i style="display:inline-block;width:7px;font-style:normal">7</i><i style="display:inline-block;width:3px;font-style:normal">/</i><i style="display:inline-block;width:7px;font-style:normal">0</i><i style="display:inline-block;width:7px;font-style:normal">9</i><i style="display:inline-block;width:3px;font-style:normal">/</i><i style="display:inline-block;width:7px;font-style:normal">2</i><i style="display:inline-block;width:7px;font-style:normal">0</i><i style="display:inline-block;width:7px;font-style:normal">2</i><i style="display:inline-block;width:7px;font-style:normal">0</i></div>
<div class="t" style="left:92px;top:365px;width:572px;overflow:hidden"><i style="display:inline-block;width:7px;font-style:normal">0</i><i style="display:inline-block;width:7px;font-style:normal">0</i><i style="display:inline-block;width:7px;font-style:normal">0</i><i style="display:inline-block;width:7px;font-style:normal">2</i><i style="display:inline-block;width:7px;font-style:normal">9</i><i style="display:inline-block;width:7px;font-style:normal">9</i></div>
<div class="t r" style="left:193px;width:110px;top:365px"><i style="display:inline-block;width:7px;font-style:normal">2</i><i style="display:inline-block;width:7px;font-style:normal">1</i><i style="display:inline-block;width:3px;font-style:normal">.</i><i style="display:inline-block;width:7px;font-style:normal">4</i><i style="display:inline-block;width:7px;font-style:normal">5</i></div>
<div class="t r" style="left:305px;width:110px;top:365px"><i style="display:inline-block;width:7px;font-style:normal">0</i><i style="display:inline-block;width:3px;font-style:normal">.</i><i style="display:inline-block;width:7px;font-style:normal">0</i><i style="display:inline-block;width:7px;font-style:normal">0</i></div>
<div class="t r" style="left:417px;width:110px;top:365px"><i style="display:inline-block;width:7px;font-style:normal">2</i><i style="display:inline-block;width:7px;font-style:normal">1</i><i style="display:inline-block;width:3px;font-style:normal">.</i><i style="display:inline-block;width:7px;font-style:normal">4</i><i style="display:inline-block;width:7px;font-style:normal">5</i></div>
<div class="abs" style="left:9px;top:492px;width:656px;height:16px;background:#efefef"></div>
<div class="abs" style="left:26px;top:492px;width:535px;height:16px;background:#cdcdcd"></div>
<svg class="abs" style="left:13px;top:495px" width="10" height="11" viewBox="0 0 10 11"><path d="M6.2 1.1L2.6 4.5L6.2 7.9" fill="none" stroke="#606060" stroke-width="2.1"/></svg>
<svg class="abs" style="left:652px;top:495px" width="10" height="11" viewBox="0 0 10 11"><path d="M3 1.1L6.6 4.5L3 7.9" fill="none" stroke="#606060" stroke-width="2.1"/></svg>
<svg class="abs" style="left:329px;top:141px" width="36" height="33" viewBox="-1 -1 36 33">
<path d="M2 -1H32L35 2V29L32 32H2L-1 29V2Z" fill="#fff"/>
<path d="M2 0H32L34 2V29L32 31H2L0 29V2Z" fill="#0000ff"/>
<path d="M6 4H28L30 6V25L28 27H6L4 25V6Z" fill="#fff"/>
<path d="M16 7H19V24H16V11H12V9H14.5L16 7Z" fill="#0000ff"/>
</svg>
<svg class="abs" style="left:476px;top:254px" width="36" height="33" viewBox="-1 -1 36 33">
<path d="M2 -1H32L35 2V29L32 32H2L-1 29V2Z" fill="#fff"/>
<path d="M2 0H32L34 2V29L32 31H2L0 29V2Z" fill="#0000ff"/>
<path d="M6 4H28L30 6V25L28 27H6L4 25V6Z" fill="#fff"/>
<path d="M12.4 11.2Q13 8.5 17 8.5Q21.5 8.6 21.5 12Q21.4 14.2 18.6 16.6L13 21.8" fill="none" stroke="#0000ff" stroke-width="2.9"/><path d="M11 22H23V24H11Z M11 20.5L13.5 20.5L13.5 22H11Z" fill="#0000ff"/>
</svg>
<svg class="abs" style="left:321px;top:384px" width="36" height="33" viewBox="-1 -1 36 33">
<path d="M2 -1H32L35 2V29L32 32H2L-1 29V2Z" fill="#fff"/>
<path d="M2 0H32L34 2V29L32 31H2L0 29V2Z" fill="#0000ff"/>
<path d="M6 4H28L30 6V25L28 27H6L4 25V6Z" fill="#fff"/>
<path d="M12.3 11.2Q12.9 8.5 17 8.5Q21.4 8.5 21.4 11.6Q21.4 14.4 18 14.4H16.2M18 14.4Q22 14.4 22 18.8Q21.9 22.6 17 22.6Q13 22.6 12.2 19.4" fill="none" stroke="#0000ff" stroke-width="2.9"/>
</svg>
<div class="abs" style="left:57px;top:259px;width:96px;height:24px;border:1px solid #a0a0a0;border-radius:4px;background:#c3d4ea;box-shadow:inset 0 0 0 1px #ffffff"></div>
<div class="abs" style="left:161px;top:259px;width:96px;height:24px;border:1px solid #a0a0a0;border-radius:4px;background:#e3eaf4;box-shadow:inset 0 0 0 1px #ffffff"></div>
<div class="abs" style="left:273px;top:259px;width:96px;height:24px;border:1px solid #a0a0a0;border-radius:4px;background:#e3eaf4;box-shadow:inset 0 0 0 1px #ffffff"></div>
<div class="abs" style="left:377px;top:259px;width:96px;height:24px;border:1px solid #a0a0a0;border-radius:4px;background:#e3eaf4;box-shadow:inset 0 0 0 1px #ffffff"></div>
<div class="abs" style="left:513px;top:259px;width:24px;height:24px;border:1px solid #a0a0a0;border-radius:4px;background:#e3eaf4;box-shadow:inset 0 0 0 1px #ffffff"></div>
<div class="t" style="left:99px;top:263px"><i style="display:inline-block;width:8px;font-style:normal">S</i><i style="display:inline-block;width:7px;font-style:normal">e</i><i style="display:inline-block;width:3px;font-style:normal">l</i><i style="display:inline-block;width:7px;font-style:normal">e</i><i style="display:inline-block;width:6px;font-style:normal">c</i><i style="display:inline-block;width:3px;font-style:normal">t</i></div>
<div class="abs" style="left:97px;top:262px;width:38px;height:17px;border:1px dotted #333"></div>
<div class="t" style="left:196px;top:263px"><i style="display:inline-block;width:8px;font-style:normal">S</i><i style="display:inline-block;width:7px;font-style:normal">e</i><i style="display:inline-block;width:3px;font-style:normal">l</i><i style="display:inline-block;width:7px;font-style:normal">e</i><i style="display:inline-block;width:6px;font-style:normal">c</i><i style="display:inline-block;width:3px;font-style:normal">t</i><i style="display:inline-block;width:2px;font-style:normal">&nbsp;</i><i style="display:inline-block;width:8px;font-style:normal">A</i><i style="display:inline-block;width:3px;font-style:normal">l</i><i style="display:inline-block;width:3px;font-style:normal">l</i></div>
<div class="t" style="left:308px;top:263px"><i style="display:inline-block;width:9px;font-style:normal">D</i><i style="display:inline-block;width:7px;font-style:normal">e</i><i style="display:inline-block;width:6px;font-style:normal">s</i><i style="display:inline-block;width:7px;font-style:normal">e</i><i style="display:inline-block;width:3px;font-style:normal">l</i><i style="display:inline-block;width:7px;font-style:normal">e</i><i style="display:inline-block;width:6px;font-style:normal">c</i><i style="display:inline-block;width:3px;font-style:normal">t</i></div>
<div class="t" style="left:404px;top:263px"><i style="display:inline-block;width:9px;font-style:normal">D</i><i style="display:inline-block;width:7px;font-style:normal">e</i><i style="display:inline-block;width:6px;font-style:normal">s</i><i style="display:inline-block;width:7px;font-style:normal">e</i><i style="display:inline-block;width:3px;font-style:normal">l</i><i style="display:inline-block;width:7px;font-style:normal">e</i><i style="display:inline-block;width:6px;font-style:normal">c</i><i style="display:inline-block;width:3px;font-style:normal">t</i><i style="display:inline-block;width:2px;font-style:normal">&nbsp;</i><i style="display:inline-block;width:8px;font-style:normal">A</i><i style="display:inline-block;width:3px;font-style:normal">l</i><i style="display:inline-block;width:3px;font-style:normal">l</i></div>
<svg class="abs" style="left:64px;top:263px" width="16" height="16" viewBox="0 0 16 16">
<defs><radialGradient id="gg" cx="0.38" cy="0.3" r="0.75"><stop offset="0" stop-color="#b4e04a"/><stop offset="1" stop-color="#4f9e0c"/></radialGradient></defs>
<circle cx="8" cy="8" r="7" fill="#3e8a08"/><circle cx="8" cy="8" r="6" fill="url(#gg)"/>
<path d="M8 4V12M4 8H12" stroke="#fff" stroke-width="2.1"/></svg>
<svg class="abs" style="left:167px;top:263px" width="20" height="17" viewBox="0 0 20 17">
<path d="M1.4 1L8.7 8.4L1.4 15.6" fill="#f8f8f8" stroke="#333" stroke-width="1"/><path d="M1.4 1V15.6" stroke="#8a8a8a" stroke-width="1"/>
<path d="M10.4 1L17.9 8.4L10.4 15.6" fill="#f8f8f8" stroke="#333" stroke-width="1"/><path d="M10.4 1V15.6" stroke="#8a8a8a" stroke-width="1"/></svg>
<svg class="abs" style="left:279px;top:262px" width="17" height="17" viewBox="0 0 17 17">
<circle cx="8.5" cy="8.5" r="7.5" fill="#d2381f"/><circle cx="8.5" cy="8.5" r="6.3" fill="#ee6a52"/>
<path d="M3.6 4.2Q8.5 0.8 13.4 4.2" fill="none" stroke="#f59a88" stroke-width="1"/>
<rect x="4" y="7" width="9" height="3" fill="#fff"/></svg>
<svg class="abs" style="left:382px;top:263px" width="20" height="17" viewBox="0 0 20 17">
<path d="M9 1L1.6 8.4L9 15.6" fill="#f8f8f8" stroke="#333" stroke-width="1"/><path d="M9 1V15.6" stroke="#8a8a8a" stroke-width="1"/>
<path d="M17.8 1L10.4 8.4L17.8 15.6" fill="#f8f8f8" stroke="#333" stroke-width="1"/><path d="M17.8 1V15.6" stroke="#8a8a8a" stroke-width="1"/></svg>
<svg class="abs" style="left:519px;top:263px" width="14" height="16" viewBox="0 0 14 16">
<path d="M0.5 0.5H9L12.5 4V14.5H0.5Z" fill="#5aae38" stroke="#3a8a1e"/>
<path d="M1.5 1.5H8.5V4.5H11.5V13.5H1.5Z" fill="none" stroke="#8fd46c" stroke-width="1"/>
<path d="M2 2H8V5H2Z" fill="#4e9a2e"/>
<path d="M9 0.8V4H12.2Z" fill="#fff"/>
<path d="M3.2 6L9.4 11.6M9 6L3.2 11.2M3 11.2H6.5" stroke="#fff" stroke-width="1.5" fill="none"/></svg>
<div class="abs" style="left:9px;top:517px;width:96px;height:42px;border:1px solid #a0a0a0;border-radius:4px;background:#e3eaf4;box-shadow:inset 0 0 0 1px #ffffff"></div>
<div class="abs" style="left:113px;top:517px;width:96px;height:42px;border:1px solid #a0a0a0;border-radius:4px;background:#e3eaf4;box-shadow:inset 0 0 0 1px #ffffff"></div>
<div class="t" style="left:47px;top:530px">OK (F5)</div>
<div class="t" style="left:153px;top:530px">Cancel</div>
<svg class="abs" style="left:10px;top:524px" width="30" height="26" viewBox="0 0 30 26">
<path d="M7.6 12.6L12 17L20.4 8.6" fill="none" stroke="#3f8a08" stroke-width="4.4" stroke-linecap="butt" stroke-linejoin="miter"/>
<path d="M7.6 12.6L12 17L20.4 8.6" fill="none" stroke="#a9d40c" stroke-width="2.4" stroke-linecap="butt"/>
</svg>
<svg class="abs" style="left:115px;top:524px" width="30" height="26" viewBox="0 0 30 26">
<path d="M7.8 7.6L18.6 18.4M18.6 7.6L7.8 18.4" stroke="#c8321c" stroke-width="4.4" stroke-linecap="butt"/>
<path d="M7.8 7.6L18.6 18.4M18.6 7.6L7.8 18.4" stroke="#f2654e" stroke-width="2.4" stroke-linecap="butt"/>
</svg>
<div class="abs" style="left:1px;top:571px;width:696px;height:1px;background:#000"></div>
<div class="abs" style="left:1px;top:572px;width:696px;height:26px;background:#f0f0f0;border-top:1px solid #fff"></div>
<div class="abs" style="left:36px;top:574px;width:626px;height:24px;border-left:1px solid #a0a0a0;border-top:1px solid #a0a0a0;border-right:1px solid #fff"></div>
<div class="t" style="left:39px;top:578px">Ready....</div>
<div class="abs" style="left:1px;top:597px;width:696px;height:1px;background:#fff"></div>
<div class="abs" style="left:693px;top:586px;width:2px;height:2px;background:#8a8a8a"></div>
<div class="abs" style="left:689px;top:590px;width:2px;height:2px;background:#8a8a8a"></div>
<div class="abs" style="left:693px;top:590px;width:2px;height:2px;background:#8a8a8a"></div>
<div class="abs" style="left:685px;top:594px;width:2px;height:2px;background:#8a8a8a"></div>
<div class="abs" style="left:689px;top:594px;width:2px;height:2px;background:#8a8a8a"></div>
<div class="abs" style="left:693px;top:594px;width:2px;height:2px;background:#8a8a8a"></div>
</body></html>
